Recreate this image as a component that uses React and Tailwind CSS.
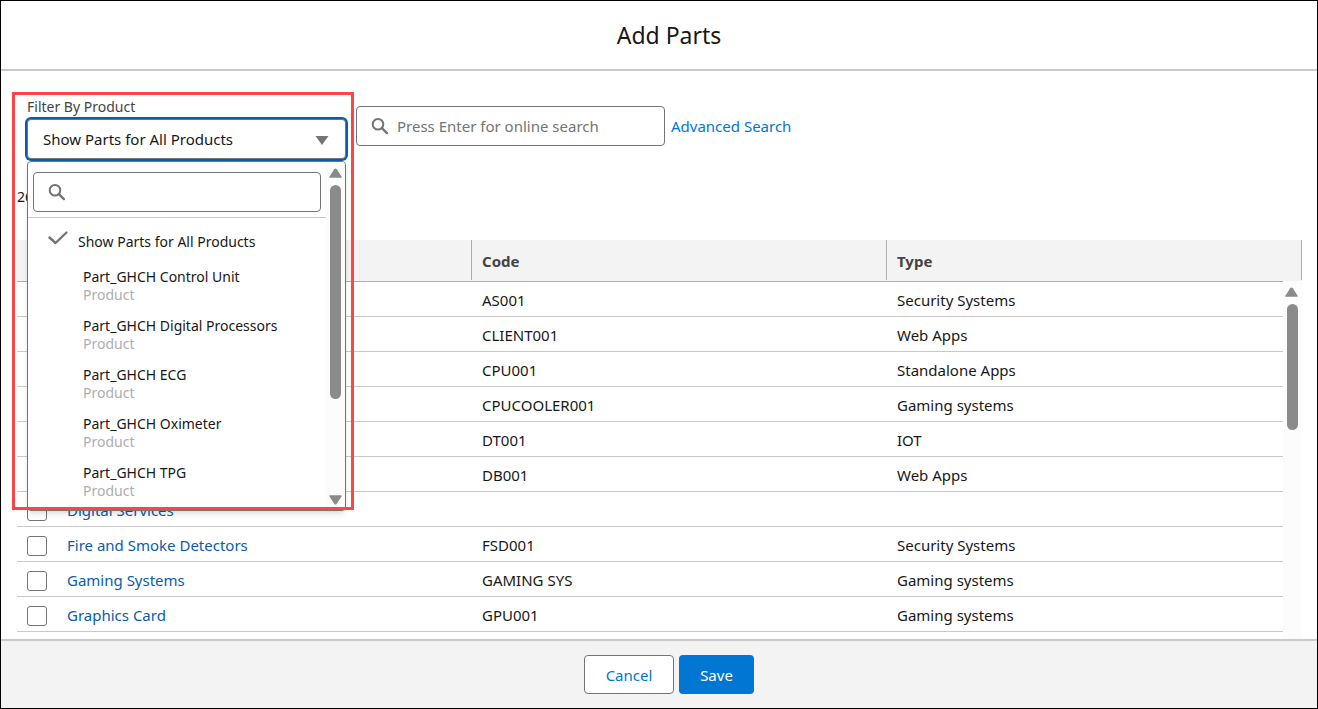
const rows = [
  { name: "", code: "AS001", type: "Security Systems" },
  { name: "", code: "CLIENT001", type: "Web Apps" },
  { name: "", code: "CPU001", type: "Standalone Apps" },
  { name: "", code: "CPUCOOLER001", type: "Gaming systems" },
  { name: "", code: "DT001", type: "IOT" },
  { name: "", code: "DB001", type: "Web Apps" },
  { name: "Digital Services", code: "", type: "" },
  { name: "Fire and Smoke Detectors", code: "FSD001", type: "Security Systems" },
  { name: "Gaming Systems", code: "GAMING SYS", type: "Gaming systems" },
  { name: "Graphics Card", code: "GPU001", type: "Gaming systems" },
];

const products = [
  "Part_GHCH Control Unit",
  "Part_GHCH Digital Processors",
  "Part_GHCH ECG",
  "Part_GHCH Oximeter",
  "Part_GHCH TPG",
];

function SearchIcon({ label }) {
  return (
    <svg viewBox="0 0 18 18" className="h-[18px] w-[18px] shrink-0" fill="none" stroke="#747474" role="img" aria-label={label}>
      <circle cx="7" cy="7.2" r="5.3" strokeWidth="2" />
      <path d="M10.900 11.100l5 5" strokeWidth="2.400" strokeLinecap="round" />
    </svg>
  );
}

function Arrow({ down }) {
  return (
    <svg viewBox="0 0 14 10" className="h-2.5 w-3.5 shrink-0" fill="#8b8b8b" aria-hidden="true">
      {down ? (
        <path d="M1.1 0.300h10.800q1.300 0 .6 1.200L7.800 8.700q-1.300 1.800-2.600 0L.5 1.500q-.7-1.200.6-1.200z" />
      ) : (
        <path d="M1.100 9.700h10.800q1.300 0 .6-1.200L7.800 1.300q-1.300-1.800-2.600 0L.5 8.500q-.7 1.200.6 1.200z" />
      )}
    </svg>
  );
}

function SearchField({ id, label, placeholder }) {
  return (
    <div className="flex h-10 items-center gap-2 rounded border border-[#747474] bg-white px-3.5">
      <label htmlFor={id}>
        <SearchIcon label={label} />
      </label>
      <input
        id={id}
        type="text"
        placeholder={placeholder}
        className="min-w-0 flex-1 bg-transparent text-[15px] outline-none placeholder:text-[#747474]"
      />
    </div>
  );
}

function ProductFilter() {
  return (
    <div className="relative ml-2.5 w-[319px]">
      <div id="filter-label" className="h-6 text-[14px] leading-6 text-[#444]">
        Filter By Product
      </div>
      <button
        type="button"
        role="combobox"
        aria-expanded="true"
        aria-controls="product-list"
        aria-labelledby="filter-label"
        className="flex h-10 w-full items-center justify-between rounded border border-[#747474] bg-white pr-4 pl-[15px] text-[15px] ring-2 ring-[#0b5cab]"
      >
        <span>Show Parts for All Products</span>
        <svg viewBox="0 0 14 9" className="mt-0.5 h-[9px] w-3.5" fill="#747474" aria-hidden="true">
          <path d="M.5 0h13L7 9z" />
        </svg>
      </button>
      <div className="absolute top-full left-0 z-10 mt-0.5 flex h-[350px] w-full overflow-hidden rounded border border-[#747474] bg-white shadow-md">
        <div className="flex-1">
          <div className="border-b border-[#c9c9c9] px-[5px] pt-2.5 pb-[5px]">
            <SearchField id="product-search" label="Search products" />
          </div>
          <ul id="product-list" role="listbox" aria-labelledby="filter-label" className="text-[14px] leading-[18px]">
            <li role="option" aria-selected="true" className="flex h-[50px] items-center gap-2.5 pb-[3px] pl-5">
              <svg viewBox="0 0 20 14" className="mb-2 h-3.5 w-5" fill="none" stroke="#747474" strokeWidth="2.400" aria-hidden="true">
                <path d="M1.500 6.500l6 5.500L18.500 1.500" strokeLinecap="round" strokeLinejoin="round" />
              </svg>
              <span>Show Parts for All Products</span>
            </li>
            {products.map((p) => (
              <li key={p} role="option" aria-selected="false" className="h-[49px] pl-[55px]">
                <div>{p}</div>
                <div className="text-[#aeaeae]">Product</div>
              </li>
            ))}
          </ul>
        </div>
        <div className="flex w-[19px] flex-col items-center bg-[#fcfcfc] pt-1.5 pb-[5px]">
          <Arrow />
          <div className="mt-[7px] h-[214px] w-[11px] rounded-full bg-[#8b8b8b]" />
          <div className="flex-1" />
          <Arrow down />
        </div>
      </div>
      <div className="pointer-events-none absolute -top-[3px] -left-[15px] z-20 h-[418px] w-[342px] border-3 border-[#fb4547]" />
    </div>
  );
}

function PartsTable() {
  return (
    <table className="w-full table-fixed border-separate border-spacing-0 text-left text-[15px]">
      <colgroup>
        <col className="w-10" />
        <col className="w-[415px]" />
        <col className="w-[415px]" />
        <col />
        <col className="w-[19px]" />
      </colgroup>
      <thead className="bg-[#f3f3f3] text-[#444]">
        <tr>
          <th colSpan={2} className="h-[41px] p-0 pb-px">
            <div className="h-10 border-r border-[#aeaeae]" />
          </th>
          <th className="p-0 pb-px">
            <div className="flex h-10 items-center border-r border-[#aeaeae] pt-0.5 pl-2.5">Code</div>
          </th>
          <th colSpan={2} className="p-0 pb-px">
            <div className="flex h-10 items-center border-r border-[#aeaeae] pt-0.5 pl-2.5">Type</div>
          </th>
        </tr>
      </thead>
      <tbody className="[&>tr:first-child>td]:border-t [&>tr:first-child>td]:border-t-[#aeaeae]">
        {rows.map((r, i) => (
          <tr key={i}>
            <td className="border-b border-[#c9c9c9] p-0 pt-[3px] pl-2.5">
              <input
                type="checkbox"
                aria-label={"Select " + (r.name || r.code)}
                className="block h-5 w-5 appearance-none rounded-[3px] border border-[#747474] bg-white"
              />
            </td>
            <td className="border-b border-[#c9c9c9] p-0 pt-0.5 pl-2.5">
              {r.name && (
                <a href="#" className="text-[#0b5cab]">
                  {r.name}
                </a>
              )}
            </td>
            <td className="border-b border-[#c9c9c9] p-0 pl-2.5">
              <div className="flex h-[34px] items-center pt-0.5">{r.code}</div>
            </td>
            <td className="border-b border-[#c9c9c9] p-0 pt-0.5 pl-2.5">{r.type}</td>
            {i === 0 && (
              <td rowSpan={rows.length + 1} className="!border-t-0 bg-[#fcfcfc] p-0 align-top">
                <div className="flex flex-col items-center pt-1.5">
                  <Arrow />
                  <div className="mt-[7px] h-[126px] w-[11px] rounded-full bg-[#8b8b8b]" />
                </div>
              </td>
            )}
          </tr>
        ))}
        <tr>
          <td colSpan={4} className="h-[35px]" />
        </tr>
      </tbody>
    </table>
  );
}

export default function App() {
  return (
    <div className="flex h-screen flex-col border border-black bg-white font-['Noto_Sans',sans-serif] text-[#181818]">
      <header className="flex h-[70px] shrink-0 items-center justify-center border-b-2 border-[#c9c9c9] pl-5">
        <h1 className="text-[23px]">Add Parts</h1>
      </header>
      <main className="min-h-0 flex-1 overflow-hidden px-4 pt-6 pr-[15px]">
        <div className="flex items-start">
          <ProductFilter />
          <div className="mt-[11px] ml-2.5 w-[309px]">
            <SearchField id="part-search" label="Search parts" placeholder="Press Enter for online search" />
          </div>
          <a href="#" className="mt-[11px] ml-1.5 text-[15px] leading-10 text-[#0176d3]">
            Advanced Search
          </a>
        </div>
        <p className="mt-7 text-[14px] leading-5">26</p>
        <div className="mt-[33px]">
          <PartsTable />
        </div>
      </main>
      <footer className="flex h-[69px] shrink-0 items-center justify-center gap-[5px] border-t-2 border-[#c9c9c9] bg-[#f3f3f3] pl-5 text-[15px]">
        <button type="button" className="h-[39px] w-[90px] rounded border border-[#747474] bg-white pt-0.5 text-[#0176d3]">
          Cancel
        </button>
        <button type="button" className="h-[39px] w-[75px] rounded bg-[#0176d3] pt-0.5 text-white">
          Save
        </button>
      </footer>
    </div>
  );
}
